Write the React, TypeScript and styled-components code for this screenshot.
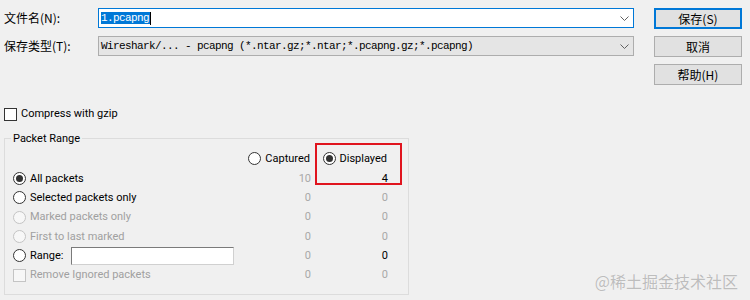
import React from "react";
import styled, { createGlobalStyle, css } from "styled-components";

const GlobalStyle = createGlobalStyle`
  html, body { margin: 0; padding: 0; background: #f0f0f0; }
  body { width: 750px; height: 300px; overflow: hidden; }
`;

const UI_FONT = `Roboto, "Noto Sans CJK SC", sans-serif`;
const CJK_FONT = `"Noto Sans CJK SC", sans-serif`;
const MONO_FONT = `"Liberation Mono", "Noto Sans CJK SC", monospace`;

const Dialog = styled.div`
  position: relative;
  width: 750px;
  height: 300px;
  box-sizing: border-box;
  padding: 8px 0 0 4px;
  background: #f0f0f0;
  display: flex;
  flex-direction: column;
  font-family: ${UI_FONT};
  font-size: 11px;
  color: #000;
`;

const TopArea = styled.div`
  display: flex;
  align-items: flex-start;
`;

const FormGrid = styled.div`
  display: grid;
  grid-template-columns: 94px 536px;
  grid-auto-rows: 20px;
  row-gap: 8px;
  align-items: center;
`;

const FieldLabel = styled.label`
  font-family: ${CJK_FONT};
  font-size: 12px;
  line-height: 20px;
  white-space: nowrap;
`;

const Field = styled.div<{ $focused?: boolean; $combo?: boolean }>`
  height: 20px;
  box-sizing: border-box;
  border: 1px solid ${(p) => (p.$focused ? "#0078d7" : "#adadad")};
  background: ${(p) => (p.$combo ? "#e5e5e5" : "#ffffff")};
  display: flex;
  align-items: center;
  padding: 0 3px 0 2px;
  font-family: ${MONO_FONT};
  font-size: 11px;
  letter-spacing: -0.6px;
  white-space: nowrap;
  overflow: hidden;
`;

const FieldText = styled.span`
  flex: 1;
  display: flex;
  align-items: center;
`;

const Selected = styled.span`
  background: #0078d7;
  color: #fff;
  line-height: 12px;
  padding: 0 1px 0 0;
`;

const Caret = styled.span`
  display: inline-block;
  width: 1px;
  height: 13px;
  background: #000;
`;

const Chevron = styled.svg`
  flex: none;
  width: 9px;
  height: 5px;
  margin-right: 1px;
`;

const ButtonColumn = styled.div`
  display: flex;
  flex-direction: column;
  gap: 7px;
  margin-left: 20px;
  width: 88px;
`;

const DlgButton = styled.button<{ $default?: boolean }>`
  height: 21px;
  box-sizing: border-box;
  margin: 0;
  padding: 0;
  background: #e1e1e1;
  border: 1px solid #adadad;
  font-family: ${CJK_FONT};
  font-size: 12px;
  line-height: 18px;
  color: #000;
  ${(p) =>
    p.$default &&
    css`
      border: 2px solid #0078d7;
    `}
`;

const CheckRow = styled.div`
  display: flex;
  align-items: center;
  gap: 4px;
  margin-top: 21px;
  height: 16px;
`;

const Box = styled.span<{ $disabled?: boolean }>`
  display: inline-block;
  flex: none;
  width: 13px;
  height: 13px;
  box-sizing: border-box;
  border: 1px solid ${(p) => (p.$disabled ? "#c4c4c4" : "#333333")};
  background: ${(p) => (p.$disabled ? "#f7f7f7" : "#ffffff")};
`;

const Text = styled.span<{ $disabled?: boolean }>`
  color: ${(p) => (p.$disabled ? "#a0a0a0" : "#000")};
  white-space: nowrap;
  line-height: 16px;
`;

const Group = styled.fieldset`
  margin: 9px 0 0 0;
  padding: 0;
  width: 405px;
  height: 164px;
  box-sizing: border-box;
  border: 1px solid #dcdcdc;
  min-width: 0;
`;

const Legend = styled.legend`
  margin-left: 6px;
  padding: 0 2px;
  line-height: 15px;
  font-size: 11px;
`;

const RangeGrid = styled.div`
  position: relative;
  display: grid;
  padding: 2px 0 0 8px;
  grid-template-columns: 232px 66px 77px;
  grid-template-rows: 21px repeat(6, 19.3px);
  align-items: center;
`;

const Option = styled.div<{ $end?: boolean }>`
  display: flex;
  align-items: center;
  gap: 4px;
  justify-self: ${(p) => (p.$end ? "end" : "start")};
  padding-right: ${(p) => (p.$end ? "1px" : "0")};
`;

const RadioCircle = styled.span<{ $disabled?: boolean; $checked?: boolean }>`
  position: relative;
  display: inline-block;
  flex: none;
  width: 13px;
  height: 13px;
  box-sizing: border-box;
  border-radius: 50%;
  border: 1px solid ${(p) => (p.$disabled ? "#c4c4c4" : "#333333")};
  background: ${(p) => (p.$disabled ? "#f7f7f7" : "#ffffff")};
  ${(p) =>
    p.$checked &&
    css`
      &::after {
        content: "";
        position: absolute;
        left: 2px;
        top: 2px;
        width: 7px;
        height: 7px;
        border-radius: 50%;
        background: #333333;
      }
    `}
`;

const Count = styled.span<{ $dim?: boolean }>`
  justify-self: end;
  color: ${(p) => (p.$dim ? "#a8a8a8" : "#000")};
  line-height: 16px;
`;

const RangeInput = styled.span`
  display: inline-block;
  margin-left: 3px;
  width: 163px;
  height: 18px;
  box-sizing: border-box;
  border: 1px solid #7a7a7a;
  border-right-color: #d0d0d0;
  border-bottom-color: #d0d0d0;
  background: #fff;
`;

const Highlight = styled.div`
  position: absolute;
  left: 310px;
  top: -3px;
  width: 87px;
  height: 42px;
  box-sizing: border-box;
  border: 2px solid #e0141e;
  pointer-events: none;
`;

const Watermark = styled.div`
  position: absolute;
  right: 12px;
  bottom: 10px;
  font-family: ${CJK_FONT};
  font-size: 16px;
  line-height: 18px;
  color: #bdbdbd;
  text-shadow: 0 0 1px rgba(255, 255, 255, 0.9);
`;

const ChevronIcon = () => (
  <Chevron viewBox="0 0 9 5">
    <polyline points="0.5,0.5 4.5,4.5 8.5,0.5" fill="none" stroke="#606060" strokeWidth="1" />
  </Chevron>
);

type Row = {
  label: string;
  radio?: boolean;
  checked?: boolean;
  disabled?: boolean;
  captured: string;
  displayed: string;
  displayedDark?: boolean;
  range?: boolean;
};

const rows: Row[] = [
  { label: "All packets", radio: true, checked: true, captured: "10", displayed: "4", displayedDark: true },
  { label: "Selected packets only", radio: true, captured: "0", displayed: "0" },
  { label: "Marked packets only", radio: true, disabled: true, captured: "0", displayed: "0" },
  { label: "First to last marked", radio: true, disabled: true, captured: "0", displayed: "0" },
  { label: "Range:", radio: true, range: true, captured: "0", displayed: "0", displayedDark: true },
  { label: "Remove Ignored packets", disabled: true, captured: "0", displayed: "0" },
];

export default function App() {
  return (
    <>
      <GlobalStyle />
      <Dialog>
        <TopArea>
          <FormGrid>
            <FieldLabel>文件名(N):</FieldLabel>
            <Field $focused>
              <FieldText>
                <Selected>1.pcapng</Selected>
                <Caret />
              </FieldText>
              <ChevronIcon />
            </Field>
            <FieldLabel>保存类型(T):</FieldLabel>
            <Field $combo>
              <FieldText>Wireshark/... - pcapng (*.ntar.gz;*.ntar;*.pcapng.gz;*.pcapng)</FieldText>
              <ChevronIcon />
            </Field>
          </FormGrid>
          <ButtonColumn>
            <DlgButton $default>保存(S)</DlgButton>
            <DlgButton>取消</DlgButton>
            <DlgButton>帮助(H)</DlgButton>
          </ButtonColumn>
        </TopArea>

        <CheckRow>
          <Box />
          <Text>Compress with gzip</Text>
        </CheckRow>

        <Group>
          <Legend>Packet Range</Legend>
          <RangeGrid>
            <span />
            <Option $end>
              <RadioCircle />
              <Text>Captured</Text>
            </Option>
            <Option $end>
              <RadioCircle $checked />
              <Text>Displayed</Text>
            </Option>
            {rows.map((r) => (
              <React.Fragment key={r.label}>
                <Option>
                  {r.radio ? (
                    <RadioCircle $checked={r.checked} $disabled={r.disabled} />
                  ) : (
                    <Box $disabled={r.disabled} />
                  )}
                  <Text $disabled={r.disabled}>{r.label}</Text>
                  {r.range && <RangeInput />}
                </Option>
                <Count $dim>{r.captured}</Count>
                <Count $dim={!r.displayedDark}>{r.displayed}</Count>
              </React.Fragment>
            ))}
            <Highlight />
          </RangeGrid>
        </Group>
        <Watermark>@稀土掘金技术社区</Watermark>
      </Dialog>
    </>
  );
}
